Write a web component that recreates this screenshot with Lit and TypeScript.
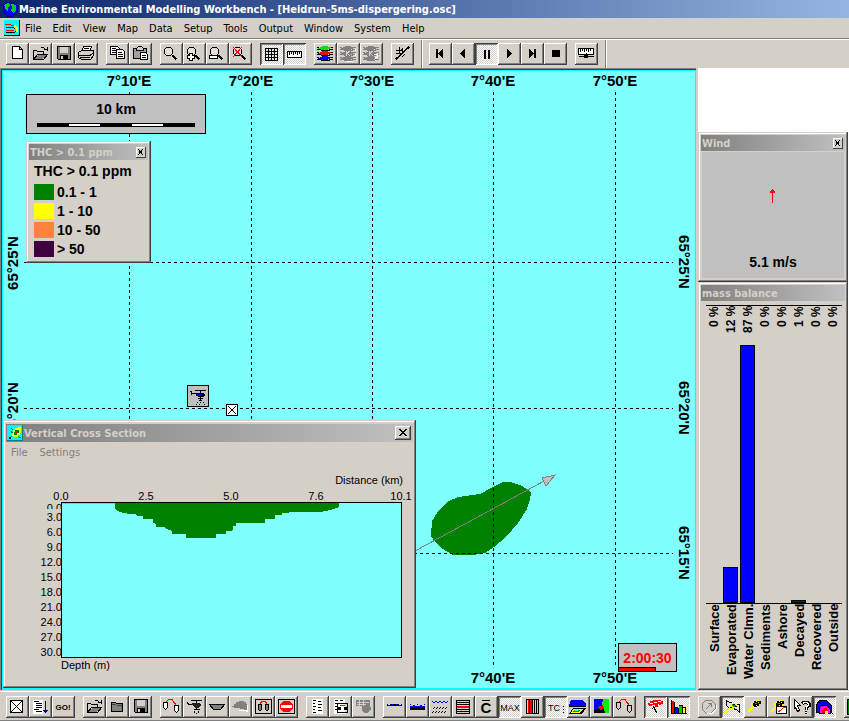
import { LitElement, html, svg, css, nothing, TemplateResult } from "lit";
import { customElement, property } from "lit/decorators.js";
import { classMap } from "lit/directives/class-map.js";

type Art = TemplateResult<2>;

const line = (d: string, color = "#000", width = 1): Art =>
  svg`<path d=${d} fill="none" stroke=${color} stroke-width=${width} />`;
const shape = (d: string, fill = "#000", stroke = "none"): Art =>
  svg`<path d=${d} fill=${fill} stroke=${stroke} />`;

const folder = (body: string): Art =>
  svg`${shape("M4.500 16.500V7.500h3l1 1h6v3M4.500 16.500l4-5h10l-4 5z", "#d4d0c8", "#000")}${shape("M5.500 16l3.500-4h8.500l-3.500 4z", body)}${line("M12 4.500h2l2 1.500 2 1M18.500 3.500v4M15 6.500h3")}`;

const lens = (extra: Art | typeof nothing): Art =>
  svg`${shape("M6.500 4.500h4l2 2v4l-2 2h-4l-2-2v-4z", "#e4e0d8", "#000")}${line("M12.500 12l4 4.500", "#000", 2)}${extra}`;

const layers = (a: string, b: string, c: string, edge: string): Art =>
  svg`${line("M3 6.500h3l2 1h6l3-1h2M3 11.500h3l2 1h6l3-1h2M3 16.500h3l2 1h6l3-1h2M17 4.500h2M17 9.500h2M17 14.500h2M3 4.500h2M3 9.500h2M3 14.500h2", edge)}
  ${shape("M4 5h2V4h2V3h6v1h3v1h-1v1h-2v1H7V6H4z", a)}${shape("M4 10h2V9h2V8h6v1h3v1h-1v1h-2v1H7v-1H4z", b)}${shape("M4 15h2v-1h2v-1h6v1h3v1h-1v1h-2v1H7v-1H4z", c)}`;

const boom = (color: string, fill: string): Art =>
  svg`${line("M6 5.500l3-2h3l2 3 2 2", color)}${shape("M3.500 6.500h4v5l-2 2-2-2zM14.500 9.500h4v5l-2 2-2-2z", fill, "#000")}`;

const heli = (color: string): Art =>
  svg`${line("M8 4.500h11M13.500 5v2M4 6.500l2 2h5")}${shape("M9 7h7l2 2-2 3h-4l-3-3z", color)}${line("M11 13.500h6M13.500 12v2M11 16.500l1-1M13 17.500h1M16 16.500l-1-1", "#000")}`;

const disk = svg`${shape("M5.500 3.500h13v13h-12l-1-1z", "#808080", "#000")}${shape("M8 4h8v6H8z", "#d4d0c8")}${shape("M8 12h8v5H8z")}${shape("M9 13h2v3H9z", "#d4d0c8")}`;

const plume = (extra: Art | typeof nothing): Art =>
  svg`${line("M4 16l5-5M6 15l3-5", "#ff0", 2)}${shape("M7 9V7h2V5h3V4h4v5h-2v2h-3v1H8V9z", "#ff0")}${shape("M10 5h2v1h1V5h4v3h-2v2h-2v1h-3v-1H9V7h1z")}${shape("M11 7h2v1h-2z", "#00a0a0")}${line("M14 6.500h1M12 9.500h1M8 7.500h1", "#ff0")}${extra}`;

const icons: Record<string, Art> = {
  page: shape("M6.500 3.500h7l3 3v9h-10zM13.500 3.500v3h3", "#fff", "#000"),
  open: folder("#808080"),
  save: disk,
  print: svg`${shape("M8.500 3.500h8l-2 5h-8z", "#fff", "#000")}${line("M9 5.500h5M8 7.500h5")}${shape("M3.500 9.500l3-2h12v5l-3 4h-9l-3-2z", "#d4d0c8", "#000")}${line("M3 12.500h12l4-3M5 14.500h10")}`,
  copy: svg`${shape("M4.500 3.500h7l2 2v6h-9z", "#fff", "#000")}${line("M6 5.500h4M6 7.500h5M6 9.500h4")}${shape("M10.500 6.500h6l2 2v7h-8z", "#fff", "#000")}${line("M12 9.500h4M12 11.500h5M12 13.500h5")}`,
  paste: svg`${shape("M4.500 5.500h13v10h-13z", "#a0a0a0", "#000")}${shape("M7.500 5.500l2-2h3l2 2v2h-7z", "#d4d0c8", "#000")}${shape("M11.500 9.500h5l2 2v5h-7z", "#fff", "#000")}${line("M13 12.500h4M13 14.500h4")}`,
  zoom: lens(nothing),
  zoomIn: lens(svg`${shape("M6.500 10.500h3v2h2v3h-2v2h-3v-2h-2v-3h2z", "#fff", "#000")}`),
  zoomOut: lens(shape("M3.500 12.500h8v3h-8z", "#fff", "#000")),
  zoomOff: lens(line("M4 4l9 10M13 4L4 14", "#f00")),
  grid: line("M5.500 5v13M8.500 5v13M11.500 5v13M14.500 5v13M17.500 5v13M5 5.500h13M5 8.500h13M5 11.500h13M5 14.500h13M5 17.500h13"),
  ruler: svg`${shape("M4.500 8.500h14v6h-14z", "#fff", "#000")}${line("M6.500 9v3M8.500 9v2M10.500 9v3M12.500 9v2M14.500 9v3M16.500 9v2")}`,
  layers: layers("#00e000", "#f00", "#00f", "#000"),
  layersOff: svg`${layers("#808080", "#808080", "#808080", "#808080")}${line("M18.500 6v2M18.500 11v2M10 18.500h6", "#fff")}${line("M9.500 8v5M13 8l-3 2 3 3", "#d4d0c8")}`,
  layersAsk: svg`${layers("#808080", "#808080", "#808080", "#808080")}${line("M9.500 8v5M13 8l-3 2 3 3", "#d4d0c8")}${line("M14 11.500h4M17.500 11v3M15 14.500h3M15.500 14v2M15 17.500h1", "#fff")}`,
  measure: svg`${line("M5 16.500l12-12")}${line("M4 15.500h3M5.500 14v3M16 4.500h3M17.500 3v3M5 7.500h5l2-2M8.500 4v7M5 10.500h5M11 7l2 3M14 11l-3 3")}`,
  first: shape("M7 6h2v9H7zM14 6v9l-5-4v-1z"),
  back: shape("M13 6v9l-5-4v-1z"),
  pause: shape("M9 7h2v9H9zM13 7h2v9h-2z"),
  play: shape("M9 6v9l5-4v-1z"),
  last: shape("M8 6v9l5-4v-1zM13 6h2v9h-2z"),
  stop: shape("M8 7h8v7H8z"),
  slider: svg`${shape("M3.500 5.500h15v6h-15z", "#fff", "#000")}${line("M5.500 6v3M7.500 6v2M9.500 6v3M11.500 6v2M13.500 6v3M15.500 6v2")}${shape("M9 12l2-2 2 2v3H9zM4 13h15v1H4z")}`,
  cross: svg`${shape("M4.500 4.500h12v12h-12z", "#fff", "#000")}${line("M4.500 4.500l12 12M16.500 4.500l-12 12")}`,
  list: svg`${shape("M4 4h10v14H4z", "#fff")}${line("M5 5.500h5M7 7.500h6M7 9.500h6M7 11.500h6M5 13.500h5M7 15.500h6")}${line("M16.500 5v11M14 14.500h5M15 15.500h3M16 16.500h1", "#000080")}`,
  go: svg`<text x="11" y="14" text-anchor="middle" class="glyph small">GO!</text>`,
  folder: svg`${shape("M5.500 15.500v-9h4l1 1h6v8z", "#808080", "#000")}${line("M6 8.500h4M11 9.500h5", "#404040")}`,
  boom: boom("#f00", "#fff"),
  heli: heli("#202020"),
  boat: shape("M3.500 8.500h15l-4 5h-7z", "#808080", "#000"),
  slick: svg`${line("M10 14.500h6l3 1M18.500 9v6", "#fff")}${shape("M3 10h2V8h2V6h3V5h5v1h2v2h1v6h-3v-1h-4v-1H5v-1H3z", "#808080")}`,
  boomBox: svg`${line("M3.500 3.500h16v14h-16z")}${line("M8 7.500l2-2h3l2 2", "#f00")}${shape("M6.500 8.500h3v5l-1 1h-1l-1-1zM13.500 8.500h3v5l-1 1h-1l-1-1z", "#808080", "#000")}`,
  noEntry: svg`${line("M3.500 3.500h16v14h-16z")}${shape("M8 5h6l4 3v5l-4 3H8l-3-3V8z", "#f00")}${shape("M6 9h11v3H6z", "#fff")}`,
  log: svg`${shape("M6 3h11v15H6z", "#fff")}${line("M7 4.500h3M7 7.500h2M7 10.500h3M7 13.500h2M7 16.500h3M12 5.500h3M12 8.500h4M12 11.500h3M12 14.500h4")}`,
  logBoom: svg`${shape("M5 3h11v15H5z", "#fff")}${line("M6 4.500h3M6 7.500h2M6 10.500h3M6 13.500h2M11 4.500h3")}${line("M8.500 7.500h10v9h-10z")}${line("M11 9.500h5", "#f00")}${shape("M9 11h3v3H9zM15 11h3v3h-3z")}`,
  grabber: svg`${shape("M4 4h14v6H4zM10 9h8l1 4-3 4h-4l-2-3z", "#808080")}${line("M5 6.500h12M5 8.500h9M7.500 4v6M11.500 4v6M4 10.500h6", "#d4d0c8")}`,
  surface: svg`${line("M7 9h9", "#000", 2)}${line("M4 9.500h15", "#000")}${line("M4 8.500h1M5 9.500h2M16 9.500h2M18 8.500h1M9 8.500h1M13 8.500h1", "#00f")}`,
  column: svg`${line("M4 12h15", "#000", 4)}${line("M4 8.500h1M7 9.500h2M11 8.500h1M14 9.500h2M18 8.500h1M4 10.500h15", "#00f")}`,
  waves: svg`${line("M3 5l2 2 2-2 2 2 2-2 2 2 2-2 2 2 2-2", "#00f")}${line("M6 11l-2 2M9 11l-2 2M12 11l-2 2M15 11l-2 2M18 11l-2 2M5 15l-2 2M8 15l-2 2M11 15l-2 2M14 15l-2 2M17 15l-2 2")}`,
  strata: svg`${line("M4.500 4.500h13v13h-13zM4 6.500h14M4 8.500h14M4 13.500h14M4 15.500h14")}${line("M5 11h12", "#f00", 2)}`,
  mean: svg`${line("M7 4.500h8")}<text x="11" y="17" text-anchor="middle" class="glyph large">C</text>`,
  max: svg`<text x="12" y="15" text-anchor="middle" class="glyph">MAX</text>`,
  stripes: svg`${shape("M5.500 3.500h12v14h-12z", "#d4d0c8", "#000")}${shape("M7 4h5v13H7z", "#f00")}${line("M8.500 4v13M11.500 4v13M13.500 4v13M15.500 4v13")}`,
  tc: svg`<text x="10" y="15" text-anchor="middle" class="glyph">TC</text>${line("M19.500 10v1M19.500 13v1M19.500 16v1", "#000080")}`,
  mapView: svg`${shape("M4 4h12l3 4v2H2z", "#00f")}${line("M2 10.500h17")}${shape("M6 12h13l-4 6H2z")}${shape("M6 13h10l-3 4H4z", "#ff0")}${shape("M7 14h6l-2 2H6z", "#0a0")}${shape("M8 14h3v1H8z", "#0ff")}`,
  coast: svg`${shape("M4 3h9l-1 6 3 4v4H4z", "#00f")}${shape("M13 3h6v14h-5l-2-6z", "#00f000")}${shape("M4 14l5-2 4-3 2 8H4z")}${shape("M8 11l5-2 1 4-4 1z", "#f00")}`,
  boomLine: boom("#f00", "#d4d0c8"),
  hammer: svg`${shape("M4 7h2V5h3V4h8v1h2v3h-2v1h-3v2h-3V9H8v1H5V9H4z", "#f00")}${line("M6 7.500h3M10 6.500h3M14 5.500h3M14 8.500h1", "#fff")}${line("M9.500 10v2M10.500 11v3M11.500 13v3M12.500 15v2M8 12.500h1", "#000")}`,
  chart: svg`${shape("M4 5h3v12H4z", "#f00")}${shape("M8 12h3v5H8z", "#00f")}${shape("M12 10h3v7h-3z", "#0c0")}${shape("M16 12h3v5h-3z", "#ff0")}${line("M4.500 4v13h15M7.500 6v11M8 11.500h3M11.500 12v5M12 9.500h3v8M15.500 11.500h3v6")}`,
  clock: svg`${shape("M8 4h5l4 4v5l-4 4H8l-4-4V8z", "#d4d0c8", "#808080")}${line("M9 17.500h5l4-4V9", "#fff")}${line("M8 13l5-5M10 7.500h3v3", "#808080")}`,
  flag: svg`${line("M4 17l6-7", "#ff0", 2)}${shape("M5.500 4.500l3 2 5 1 5 1v8l-3-3-4-1-4-1-2-2z", "#e4e0d8", "#000")}${shape("M8 9h3V7h5v4h-3v2H8z", "#ff0")}${shape("M11 8h3v1h1v2h-3v-1h-1z", "#0a0")}${line("M12 8.500h2M14 10.500h2M9 11.500h2")}`,
  source: plume(nothing),
  sourcePlot: plume(svg`${shape("M9.500 10.500h10v7h-10z", "#fff", "#000")}${line("M11 16l3-2 2-2 3-1", "#f00")}`),
  ask: svg`${shape("M4.500 3.500l6 6h-3l2 5-2 1-2-4-1 1z", "#fff", "#000")}${line("M12 8l2-2h3l2 2v2l-3 2v2M15 16.500h2", "#000", 3)}${line("M13 7.500l1-1h3l1 1v2l-2 2v2M15 16.500h2", "#fff")}`,
  rainbow: svg`${shape("M3 16V9l4-5h6l5 5 1 8z", "#00f", "#000")}${shape("M6 17v-5l3-3h5l3 4v4z", "#f0f", "#000")}${shape("M9 17v-3l3-2h2l1 5z", "#f00")}${shape("M12 15h3v3h-3z", "#ff0")}`,
  panel: shape("M3 3h16v15H3z", "#008000", "#000"),
  globe: svg`${shape("M5 1h6l4 4v6l-4 4H5l-4-4V5z", "#00f", "#000080")}${shape("M2 4l4-2 2 2-2 3v3L4 9zM9 3l5 1v5l-3 3-2-2 1-3z", "#00d000")}`,
  chartDoc: svg`${shape("M0 0h16v16H0z", "#00f8f8")}${line("M1 4.500h5l2 1h3M2 10.500h8", "#f00")}${line("M2 7.500h7l2 1M2 12.500h8l4-2M0 15.500h16M15.500 0v16")}${line("M10 5.500l3 2v4", "#ff0", 2)}`,
  slickDoc: svg`${shape("M0 0h16v16H0z", "#00f8f8")}${line("M3 13l3-3M4 3l3 3M10 11l4 2M4 6l2 3", "#008000")}${shape("M6 5h2V3h3V2h3v6h-1v2h-2v2H6v-1H5V8h1z", "#ff0")}${shape("M8 5h4v3h-2v2H7V7h1z", "#008000")}${shape("M8 6h3v1h-1v2H8z", "#f00")}${shape("M2 12h2v2H2z")}${line("M0 15.500h16M15.500 0v16", "#008080")}`,
};

@customElement("pixel-icon")
class PixelIcon extends LitElement {
  @property() name = "";
  @property() box = "0 0 23 22";
  static styles = css`
    :host { display: block; }
    svg { display: block; width: 100%; height: 100%; shape-rendering: crispEdges; }
    .glyph { font: 9px "Liberation Sans", sans-serif; }
    .small { font-size: 8px; font-weight: bold; }
    .large { font-size: 15px; font-weight: bold; }
  `;
  render() {
    return html`<svg viewBox=${this.box} aria-hidden="true">${icons[this.name]}</svg>`;
  }
}

@customElement("tool-bar")
class ToolBar extends LitElement {
  // Groups of "icon" or "icon!" (pressed); "|" draws a separator.
  @property({ attribute: false }) groups: string[][] = [];
  static styles = css`
    :host { display: flex; gap: 8px; overflow: hidden; }
    .group { display: flex; flex: none; }
    .sep { flex: none; width: 0; align-self: stretch; border-left: 1px solid #808080; border-right: 1px solid #fff; margin: -3px -2px -3px -1px; }
    button {
      width: 23px; height: 22px; padding: 0; border: 0; background: #d4d0c8;
      box-shadow: inset -1px -1px #404040, inset 1px 1px #fff, inset -2px -2px #808080;
    }
    .pressed {
      background: repeating-conic-gradient(#fff 0 25%, #d4d0c8 0 50%) 0 0 / 2px 2px;
      box-shadow: inset 1px 1px #404040, inset -1px -1px #fff, inset 2px 2px #808080;
    }
    pixel-icon { width: 23px; height: 22px; }
  `;
  render() {
    return this.groups.map((g) =>
      g[0] === "|"
        ? html`<span class="sep"></span>`
        : html`<div class="group">${g.map((item) => {
            const pressed = item.endsWith("!");
            const name = item.replace("!", "");
            return html`<button type="button" aria-label=${name} aria-pressed=${pressed} class=${classMap({ pressed })}>
              <pixel-icon .name=${name}></pixel-icon>
            </button>`;
          })}</div>`
    );
  }
}

@customElement("tool-window")
class ToolWindow extends LitElement {
  @property() heading = "";
  @property() icon = "";
  @property({ type: Boolean }) closable = false;
  @property({ type: Boolean, reflect: true }) large = false;
  static styles = css`
    :host {
      display: flex; flex-direction: column; box-sizing: border-box; padding: 3px; background: #d4d0c8;
      box-shadow: inset -1px -1px #404040, inset 1px 1px #d4d0c8, inset -2px -2px #808080, inset 2px 2px #fff;
    }
    .bar {
      display: flex; align-items: center; flex: none; height: 16px; padding: 0 2px 0 1px;
      background: linear-gradient(90deg, #808080, #c0c0c0);
      font: bold 11px "DejaVu Sans Condensed", "DejaVu Sans", sans-serif; color: #d4d0c8; white-space: nowrap;
    }
    .title { flex: 1; }
    .close {
      width: 10px; height: 11px; padding: 0; border: 0; background: #d4d0c8; display: flex;
      box-shadow: inset -1px -1px #404040, inset 1px 1px #fff;
    }
    .close svg { width: 100%; height: 100%; shape-rendering: crispEdges; }
    pixel-icon { width: 16px; height: 16px; margin-right: 1px; }
    .body { flex: 1; display: flex; flex-direction: column; }
    :host([large]) { padding: 4px 3px 3px 3px; }
    :host([large]) .bar { height: 18px; }
    :host([large]) .close { width: 16px; height: 14px; box-shadow: inset -1px -1px #404040, inset 1px 1px #fff, inset -2px -2px #808080; }
  `;
  render() {
    return html`
      <div class="bar">
        ${this.icon ? html`<pixel-icon .name=${this.icon} box="0 0 16 16"></pixel-icon>` : nothing}
        <span class="title">${this.heading}</span>
        ${this.closable
          ? html`<button type="button" class="close" aria-label="Close">
              ${this.large
                ? html`<svg viewBox="0 0 16 14"><path d="M4 3l7 7M5 3l7 7M11 3l-7 7M12 3l-7 7" stroke="#000" /></svg>`
                : html`<svg viewBox="0 0 10 11"><path d="M2 2l5 6M7 2l-5 6" stroke="#000" /></svg>`}
            </button>`
          : nothing}
      </div>
      <div class="body"><slot></slot></div>
    `;
  }
}

@customElement("mass-balance")
class MassBalance extends LitElement {
  static styles = css`
    :host { display: flex; flex-direction: column; flex: 1; padding: 4px 5px 3px; }
    .plot, .names { display: grid; grid-template-columns: repeat(8, 17px); }
    .plot { flex: 1; width: 136px; border-top: 1px solid #000; border-bottom: 1px solid #000; }
    .names { height: 80px; }
    .col { position: relative; }
    .text { display: block; box-sizing: border-box; writing-mode: vertical-rl; transform: rotate(180deg); white-space: nowrap; width: 17px; text-align: right; }
    .value { font: bold 12px/17px "Liberation Sans", sans-serif; height: 30px; }
    .name { font: bold 13px/17px "Liberation Sans", sans-serif; height: 80px; }
    .bar { position: absolute; left: 0; bottom: 0; box-sizing: border-box; width: 15px; background: #00f; border: 1px solid #000; }
  `;
  render() {
    const rows: [string, number][] = [
      ["Surface", 0], ["Evaporated", 12], ["Water Clmn.", 87], ["Sediments", 0],
      ["Ashore", 0], ["Decayed", 1], ["Recovered", 0], ["Outside", 0],
    ];
    return html`
      <div class="plot">
        ${rows.map(([, v]) => html`<div class="col">
          <span class="text value">${v} %</span>
          ${v ? html`<span class="bar" style="height:${v}%"></span>` : nothing}
        </div>`)}
      </div>
      <div class="names">${rows.map(([n]) => html`<span class="text name">${n}</span>`)}</div>
    `;
  }
}

@customElement("app-root")
class AppRoot extends LitElement {
  static styles = css`
    :host {
      display: flex; flex-direction: column; min-height: 100vh; overflow: hidden; background: #d4d0c8; color: #000;
      font: 11px "DejaVu Sans Condensed", "DejaVu Sans", sans-serif;
    }
    .titlebar {
      display: flex; align-items: center; gap: 1px; height: 18px; padding-left: 2px; color: #fff; white-space: nowrap;
      background: linear-gradient(90deg, #0a246a, #95b5e0);
      font-weight: bold; font-size: 11px;
    }
    .doc { width: 16px; height: 16px; flex: none; }
    .menu { display: flex; align-items: center; gap: 11px; height: 20px; padding-left: 4px; border-bottom: 1px solid #808080; }
    .menu .doc { margin-right: -6px; }
    .menu button, .submenu button { border: 0; padding: 0; background: none; font: inherit; color: inherit; }
    .tools { padding: 3px 6px; border-top: 1px solid #fff; height: 22px; }
    .bottom { padding: 4px 6px 2px; height: 22px; margin-top: 1px; border-top: 1px solid #fff; border-bottom: 1px solid #808080; }
    .main { display: grid; grid-template-columns: minmax(0, 1fr) 152px; flex: 1; }
    .map {
      position: relative; background: #80ffff; overflow: hidden; border-right: 1px solid #d4d0c8;
      box-shadow: inset 1px 1px #808080, inset 2px 2px #404040, inset 3px 3px #0ff, inset -1px -2px #0ff;
    }
    .chart { position: absolute; width: 100%; height: 100%; shape-rendering: crispEdges; }
    .chart text { font: bold 15px "Liberation Sans", sans-serif; text-anchor: middle; }
    .grid { stroke: #000; stroke-dasharray: 3 3; }
    .scale {
      position: absolute; left: 26px; top: 26px; width: 178px; height: 38px; background: #c0c0c0; border: 1px solid #000;
      display: flex; flex-direction: column; align-items: center; font: bold 14px/28px "Liberation Sans", sans-serif;
    }
    .ruler { display: grid; grid-template-columns: repeat(5, 1fr); width: 158px; height: 4px; background: #000; }
    .ruler i:nth-child(even) { background: #fff; margin: 1px 0; }
    .legend { position: absolute; left: 26px; top: 73px; width: 125px; height: 122px; font: bold 14px/16px "Liberation Sans", sans-serif; }
    .keys { display: grid; grid-template-columns: 20px 1fr; gap: 3px; padding: 2px 5px; margin: 0; }
    .keys dt, .keys dd { margin: 0; height: 16px; }
    .keys .head { grid-column: 1 / 3; height: 19px; line-height: 18px; white-space: nowrap; }
    .green { background: #008000; } .yellow { background: #ff0; } .orange { background: #ff8040; } .purple { background: #400040; }
    .timer {
      position: absolute; left: 618px; bottom: 18px; width: 57px; height: 27px; border: 1px solid #000; background: #c0c0c0;
      color: #f00; font: bold 14px/28px "Liberation Sans", sans-serif; text-align: center;
    }
    .progress { position: absolute; left: 0; bottom: 0; width: 36px; height: 3px; background: #f00; border-top: 1px solid #000; border-right: 1px solid #000; }
    .section { position: absolute; left: 3px; top: 352px; width: 413px; height: 268px; }
    .submenu { display: flex; gap: 12px; padding: 5px 5px 4px; color: #808080; height: 12px; line-height: 12px; }
    .profile { display: block; width: 407px; height: 218px; shape-rendering: crispEdges; }
    .profile text { font: 11px "Liberation Sans", sans-serif; }
    .end { text-anchor: end; } .mid { text-anchor: middle; }
    .side { display: flex; flex-direction: column; background: #fff; padding: 64px 1px 0 0; border-left: 1px solid #d4d0c8; }
    .wind { height: 150px; }
    .dial {
      flex: 1; margin: 1px; background: #c0c0c0; display: flex; flex-direction: column; align-items: center; justify-content: space-between;
      padding: 37px 0 8px; font: bold 14px/16px "Liberation Sans", sans-serif;
    }
    .dial svg { width: 6px; height: 14px; shape-rendering: crispEdges; }
    .mass { flex: 1; }
  `;

  private topGroups = [
    ["page", "open", "save", "print"], ["copy", "paste"], ["zoom", "zoomIn", "zoomOut", "zoomOff"], ["grid!", "ruler!"],
    ["layers", "layersOff", "layersAsk"], ["measure"], ["|"], ["first", "back", "pause!", "play", "last", "stop"], ["slider"], ["|"],
  ];
  private bottomGroups = [
    ["cross", "list", "go"], ["open", "folder", "save"], ["boom", "heli", "boat", "slick", "boomBox", "noEntry"],
    ["log", "logBoom", "grabber"],
    ["surface", "column", "waves", "strata", "mean", "max!", "stripes", "tc!", "mapView", "coast", "boomLine"],
    ["hammer!", "chart!"], ["clock", "flag!", "source", "sourcePlot", "ask", "rainbow!"], ["panel"],
  ];

  private renderMap() {
    const meridians: [number, string][] = [[129, "7°10'E"], [251, "7°20'E"], [372, "7°30'E"], [493, "7°40'E"], [615, "7°50'E"]];
    const parallels: [number, string][] = [[194, "65°25'N"], [340, "65°20'N"], [485, "65°15'N"]];
    return html`<svg class="chart" role="img" aria-label="Map">
      <path fill="#008000" d="M432 453l5-8 10-11 11-5 22-3 13-7 10-5h8l11 4 9 6-1 8-3 9-9 14-12 14-12 10-9 6-12 2h-20l-12-7-6-6-4-6z" />
      ${meridians.map(([x]) => svg`<path class="grid" d="M${x} 24V600" />`)}
      ${parallels.map(([y]) => svg`<path class="grid" d="M24 ${y}H673" />`)}
      ${meridians.map(([x, t]) => svg`<text x=${x} y="18">${t}</text><text x=${x} y="615">${t}</text>`)}
      ${parallels.map(([y, t]) => svg`
        <text transform="translate(18 ${y + 1}) rotate(-90)">${t}</text>
        <text transform="translate(679 ${y}) rotate(90)">${t}</text>`)}
      <path d="M415 483L546 412" stroke="#808080" />
      <path d="M555 407l-13 3 4 8z" fill="#c0c0c0" stroke="#808080" />
      <path d="M187.500 317.500h21v21h-21z" fill="#c0c0c0" stroke="#000" />
      <g transform="translate(186 317)">
        <path d="M9 5.500h11M14.500 6v3M5 8.500h6M4 6.500h2M5.500 6v4M12 13.500h5M14.500 12v3" fill="none" stroke="#000" />
        <path d="M10 8h8v1h1v2h-1v1h-6v-1h-2z" /><path d="M11 9h4v2h-4z" fill="#00f" />
        <path d="M13 15h3v1h-3zM11 17h1v1h-1zM14 17h1v1h-1zM17 17h1v1h-1zM10 19h1v1h-1zM13 19h1v1h-1zM18 19h1v1h-1z" />
      </g>
      <path d="M226.500 336.500h11v11h-11z" fill="#fff" stroke="#000" />
      <path d="M228 338l8 8M236 338l-8 8" stroke="#000" />
    </svg>`;
  }

  private renderProfile() {
    const xs: [number, string][] = [[55, "0.0"], [140, "2.5"], [225, "5.0"], [310, "7.6"], [395, "10.1"]];
    const depths = ["3.0", "6.0", "9.0", "12.0", "15.0", "18.0", "21.0", "24.0", "27.0", "30.0"];
    return html`<svg class="profile" role="img" aria-label="Vertical cross section">
      <text class="end" x="397" y="21">Distance (km)</text>
      ${xs.map(([x, t]) => svg`<text class="mid" x=${x} y="37">${t}</text>`)}
      <text class="end" x="56" y="49">0.0</text>
      <path d="M30 46h26v10H30z" fill="#d4d0c8" />
      ${depths.map((t, i) => svg`<text class="end" x="56" y=${58 + i * 15}>${t}</text>`)}
      <path d="M55.500 39.500h340v155h-340z" fill="#80ffff" stroke="#000" />
      <path d="M56 40.500h53" stroke="#0ff" />
      <path fill="#008000" d="M109 40v6l5 3 9 2h6l2 2h6v3h10v4l3 1v3h8l2 2 6 2v3h14v4h30v-4h10v-3h5l2-2v-3h3v-3h29v-4h10v-4h7v-2l13-1h25l10-2 9-3v-4z" />
      <text x="55" y="206">Depth (m)</text>
    </svg>`;
  }

  render() {
    const menus = ["File", "Edit", "View", "Map", "Data", "Setup", "Tools", "Output", "Window", "System", "Help"];
    const keys = [["green", "0.1 - 1"], ["yellow", "1 - 10"], ["orange", "10 - 50"], ["purple", "> 50"]];
    return html`
      <header class="titlebar">
        <pixel-icon class="doc" name="globe" box="0 0 16 16"></pixel-icon>
        <span>Marine Environmental Modelling Workbench - [Heidrun-5ms-dispergering.osc]</span>
      </header>
      <nav class="menu">
        <pixel-icon class="doc" name="chartDoc" box="0 0 16 16"></pixel-icon>
        ${menus.map((m) => html`<button type="button">${m}</button>`)}
      </nav>
      <tool-bar class="tools" .groups=${this.topGroups}></tool-bar>
      <main class="main">
        <section class="map">
          ${this.renderMap()}
          <div class="scale">10 km<div class="ruler"><i></i><i></i><i></i><i></i><i></i></div></div>
          <tool-window class="legend" heading="THC > 0.1 ppm" closable>
            <dl class="keys">
              <dt class="head">THC &gt; 0.1 ppm</dt>
              ${keys.map(([c, t]) => html`<dt class=${c}></dt><dd>${t}</dd>`)}
            </dl>
          </tool-window>
          <div class="timer">2:00:30<div class="progress"></div></div>
          <tool-window class="section" heading="Vertical Cross Section" icon="slickDoc" large closable>
            <div class="submenu"><button type="button">File</button><button type="button">Settings</button></div>
            ${this.renderProfile()}
          </tool-window>
        </section>
        <aside class="side">
          <tool-window class="wind" heading="Wind" closable>
            <div class="dial">
              <svg viewBox="0 0 6 14"><path d="M2 0h1v1h1v1h1v2H3v10H2V4H0V2h1V1h1z" fill="#f00" /></svg>
              <span>5.1 m/s</span>
            </div>
          </tool-window>
          <tool-window class="mass" heading="mass balance"><mass-balance></mass-balance></tool-window>
        </aside>
      </main>
      <tool-bar class="bottom" .groups=${this.bottomGroups}></tool-bar>
    `;
  }
}
